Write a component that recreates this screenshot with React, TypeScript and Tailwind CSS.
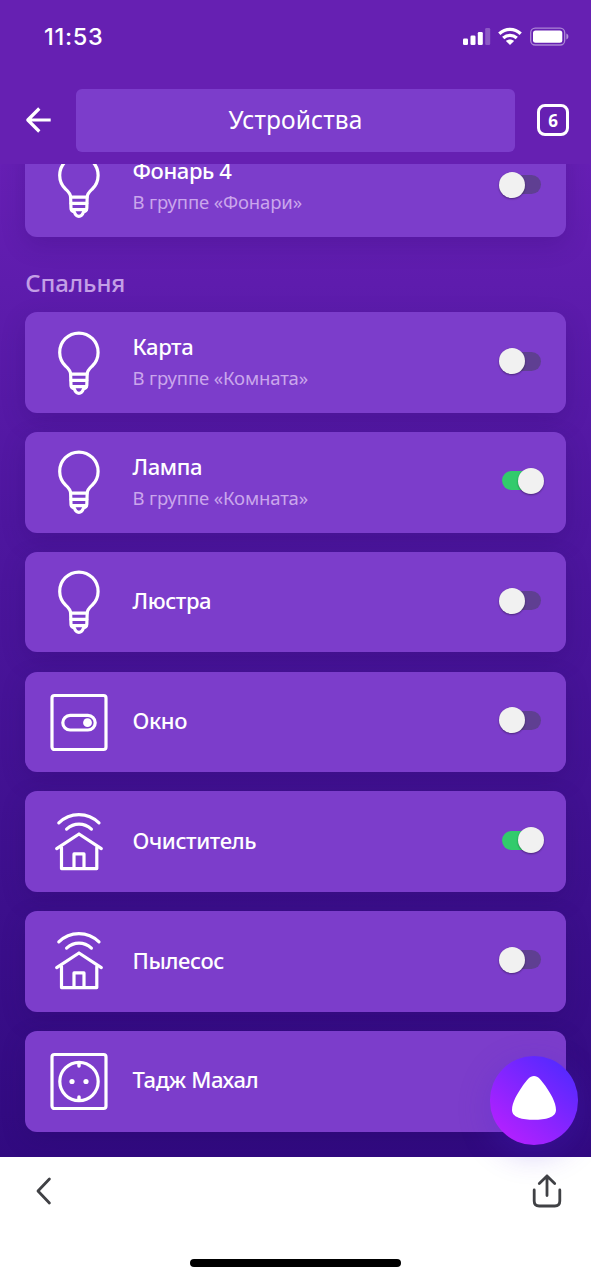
import React from 'react';
import clsx from 'clsx';

type IconName = 'bulb' | 'switch' | 'house' | 'socket';

interface Device {
  name: string;
  icon: IconName;
  group?: string;
  on?: boolean;
  noToggle?: boolean;
}

const devices: Device[] = [
  { name: 'Карта', icon: 'bulb', group: 'Комната', on: false },
  { name: 'Лампа', icon: 'bulb', group: 'Комната', on: true },
  { name: 'Люстра', icon: 'bulb', on: false },
  { name: 'Окно', icon: 'switch', on: false },
  { name: 'Очиститель', icon: 'house', on: true },
  { name: 'Пылесос', icon: 'house', on: false },
  { name: 'Тадж Махал', icon: 'socket', noToggle: true },
];

const DeviceIcon: React.FC<{ name: IconName }> = ({ name }) => (
  <svg
    className="w-[58px] h-[65px] mt-px shrink-0"
    viewBox="0 0 58 65"
    fill="none"
    stroke="white"
    strokeWidth="3.2"
    strokeLinecap="round"
    strokeLinejoin="round"
  >
    {name === 'bulb' && (
      <>
        <path d="M20.6 43C20.4 39.2 18.4 37.6 15.5 35A19.2 19.2 0 1 1 42.3 35C39.4 37.6 37.4 39.2 37.2 43L36.8 54.5Q36.6 57.4 33.6 57.8Q32 62.4 28.9 62.4T24.2 57.8Q21.2 57.4 21 54.5Z" />
        <path d="M20.8 43.1h16.2M21 49.3h15.8M21.4 55.6h15" />
      </>
    )}
    {name === 'switch' && (
      <>
        <rect x="2" y="5.5" width="54" height="54" rx="2.5" />
        <rect x="12.8" y="25.4" width="32.4" height="14.6" rx="7.3" />
        <circle cx="37.5" cy="32.7" r="4.4" fill="white" stroke="none" />
      </>
    )}
    {name === 'house' && (
      <>
        <path d="M8.8 12.9C20 1.8 37.8 1.8 49 12.9" />
        <path d="M16.6 19.1C24 12.5 34 12.5 41.4 19.1" />
        <path d="M6.7 38.6L29 24L51.3 38.6" />
        <path d="M11.5 37.5V58.6H46.8V37.5" />
        <path d="M24 58.4V43.9H34V58.4" />
      </>
    )}
    {name === 'socket' && (
      <>
        <rect x="2" y="5.5" width="54" height="54" rx="2.5" />
        <circle cx="29" cy="32.5" r="19.2" />
        <path d="M29 14v3M29 48v3" strokeWidth="3.5" />
        <circle cx="22" cy="32.5" r="2.6" fill="white" stroke="none" />
        <circle cx="36" cy="32.5" r="2.6" fill="white" stroke="none" />
      </>
    )}
  </svg>
);

const Toggle: React.FC<{ on?: boolean }> = ({ on }) => (
  <div
    className={clsx(
      'flex items-center w-[39px] h-[19px] mb-[3px] rounded-full shrink-0',
      on ? 'bg-[#32cb6c] justify-end' : 'bg-[#5f3f92]'
    )}
  >
    <div
      className={clsx(
        'w-[26px] h-[26px] rounded-full bg-[#f1f1f1] shadow-[0_1px_2px_rgba(0,0,0,0.4)] shrink-0',
        on ? '-mr-[3px]' : '-ml-[3px]'
      )}
    />
  </div>
);

const DeviceCard: React.FC<{ device: Device }> = ({ device }) => (
  <div className="flex items-center h-[100.7px] rounded-[12px] bg-[#7c3dcb] pl-[24.7px] pr-[25px] shadow-[0_8px_24px_rgba(32,0,90,0.18)] shrink-0">
    <DeviceIcon name={device.icon} />
    <div className="flex-1 pl-[24.5px] pb-[3.5px]">
      <div className="text-[22px] leading-[30px] font-medium tracking-[-0.4px] text-white">{device.name}</div>
      {device.group && (
        <div className="text-[18.5px] leading-[26px] mt-[4px] tracking-[-0.14px] text-[#caa6ec]">
          В группе «{device.group}»
        </div>
      )}
    </div>
    {!device.noToggle && <Toggle on={device.on} />}
  </div>
);

const StatusBar = () => (
  <div className="flex justify-between items-center h-[74px] pl-[44px] pr-[22px]">
    <span className="font-[Inter] font-medium text-[23.5px] leading-none tracking-[0.7px] text-white">11:53</span>
    <svg className="w-[106px] h-[20px]" viewBox="0 0 106 20" fill="white">
      <rect x="0" y="11.5" width="5" height="6.5" rx="1.3" />
      <rect x="7.5" y="8.5" width="5" height="9.5" rx="1.3" />
      <rect x="14.8" y="5" width="5" height="13" rx="1.3" />
      <rect x="22.2" y="1" width="5" height="17" rx="1.3" opacity="0.25" />
      <g fill="none" stroke="white" strokeWidth="3.3">
        <path d="M36.3 6.7C42.5 0.9 51.5 0.9 57.7 6.7" />
        <path d="M40.2 11C44.2 7.5 49.8 7.5 53.8 11" />
      </g>
      <path d="M42.9 13.9C45.3 11.9 48.7 11.9 51.1 13.9L47 18Z" />
      <rect x="67.7" y="1.2" width="34" height="16.8" rx="4.5" fill="none" stroke="white" strokeOpacity="0.45" strokeWidth="1.3" />
      <rect x="70" y="3.5" width="29.3" height="12.2" rx="2.5" />
      <path d="M103.4 6.5C106 7.5 106 11.5 103.4 12.6Z" opacity="0.5" />
    </svg>
  </div>
);

const Header = () => (
  <header className="relative z-10 h-[164px] bg-[#6620b2] shrink-0">
    <StatusBar />
    <div className="flex items-center pt-[14.5px] pl-[25px] pr-[22px]">
      <svg
        className="w-[26px] h-[26px]"
        viewBox="0 0 26 26"
        fill="none"
        stroke="white"
        strokeWidth="3.2"
        strokeLinejoin="round"
      >
        <path d="M25.7 13H3M14.3 1.5L2.8 13L14.3 24.5" />
      </svg>
      <div className="flex items-center justify-center w-[439px] h-[63px] ml-[25px] pt-px rounded-[6px] bg-[#7c3dcb] text-white text-[24.5px] tracking-[0.15px]">
        Устройства
      </div>
      <div className="flex items-center justify-center w-[32px] h-[32px] ml-auto rounded-[8px] border-3 border-white text-white text-[17px] font-bold leading-none">
        6
      </div>
    </div>
  </header>
);

const AliceButton = () => (
  <button className="absolute right-[13px] top-[1056px] z-20 flex items-center justify-center w-[88.5px] h-[88.5px] rounded-full bg-[linear-gradient(220deg,#5529ff_12%,#b620ff_90%)] shadow-[0_8px_32px_rgba(80,40,220,0.28)]">
    <svg className="w-[46px] h-[44px] -mt-[4px]" viewBox="0 0 46 44" fill="white">
      <path d="M23 0C27.2 0 30.2 4.2 34.3 9.8C39.5 17.3 45 26.5 45 34C45 41.5 34.5 43.8 23 43.8S1 41.5 1 34C1 26.5 6.5 17.3 11.7 9.8C15.8 4.2 18.8 0 23 0Z" />
    </svg>
  </button>
);

const BottomBar = () => (
  <footer className="flex flex-col justify-between h-[123.5px] bg-white shrink-0">
    <div className="flex justify-between items-center pt-[17px] pl-[35.5px] pr-[29.5px]">
      <svg className="w-[16px] h-[28px]" viewBox="0 0 16 28" fill="none" stroke="#404145" strokeWidth="2.8" strokeLinecap="round" strokeLinejoin="round">
        <path d="M13.4 2L2 14L13.4 26" />
      </svg>
      <svg className="w-[30px] h-[34px]" viewBox="0 0 30 34" fill="none" stroke="#404145" strokeWidth="2.8" strokeLinecap="round" strokeLinejoin="round">
        <path d="M15 21.5V2M7.3 9.5L15 2L22.7 9.5" />
        <path d="M2.2 16V27Q2.2 32 7.2 32H22.8Q27.8 32 27.8 27V16" />
      </svg>
    </div>
    <div className="w-[211px] h-[8px] mb-[13px] rounded-full bg-black self-center" />
  </footer>
);

const App: React.FC = () => {
  return (
    <div className="relative flex flex-col w-[591px] h-[1280px] overflow-hidden font-['Noto_Sans',sans-serif]">
      <Header />
      <main className="h-[992.5px] overflow-hidden px-[25.3px] shrink-0 bg-[linear-gradient(180deg,#661fb4_0%,#4e169f_36%,#3c0f8c_75%,#310a80_100%)]">
        <div className="-mt-[28px]">
          <DeviceCard device={{ name: 'Фонарь 4', icon: 'bulb', group: 'Фонари', on: false }} />
        </div>
        <h2 className="mt-[30px] h-[45.5px] text-[24px] leading-[32px] font-medium tracking-[-0.1px] text-[#c39fe6]">Спальня</h2>
        <div className="flex flex-col gap-[19.1px]">
          {devices.map((device) => (
            <DeviceCard key={device.name} device={device} />
          ))}
        </div>
      </main>
      <BottomBar />
      <AliceButton />
    </div>
  );
};

export default App;
